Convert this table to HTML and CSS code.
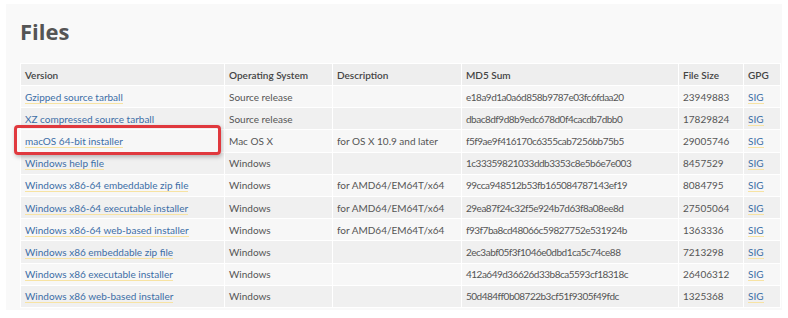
FILE: index.html
```html
<!DOCTYPE html>
<html lang="en">
<head>
    <meta charset="UTF-8">
    <title>Files</title>
    <link rel="stylesheet" href="styles.css">
</head>
<body>
    <div class="files-panel">
        <h2 class="files-title">Files</h2>

        <table class="files-table">
            <thead>
                <tr>
                    <th class="col-version">Version</th>
                    <th class="col-os">Operating System</th>
                    <th class="col-desc">Description</th>
                    <th class="col-md5">MD5 Sum</th>
                    <th class="col-size">File Size</th>
                    <th class="col-gpg">GPG</th>
                </tr>
            </thead>
            <tbody>
                <tr>
                    <td><a href="#">Gzipped source tarball</a></td>
                    <td>Source release</td>
                    <td></td>
                    <td class="md5">e18a9d1a0a6d858b9787e03fc6fdaa20</td>
                    <td>23949883</td>
                    <td><a href="#">SIG</a></td>
                </tr>
                <tr>
                    <td><a href="#">XZ compressed source tarball</a></td>
                    <td>Source release</td>
                    <td></td>
                    <td class="md5">dbac8df9d8b9edc678d0f4cacdb7dbb0</td>
                    <td>17829824</td>
                    <td><a href="#">SIG</a></td>
                </tr>
                <tr>
                    <td class="highlight-cell"><a href="#">macOS 64-bit installer</a><span class="highlight-box"></span></td>
                    <td>Mac OS X</td>
                    <td>for OS X 10.9 and later</td>
                    <td class="md5">f5f9ae9f416170c6355cab7256bb75b5</td>
                    <td>29005746</td>
                    <td><a href="#">SIG</a></td>
                </tr>
                <tr>
                    <td><a href="#">Windows help file</a></td>
                    <td>Windows</td>
                    <td></td>
                    <td class="md5">1c33359821033ddb3353c8e5b6e7e003</td>
                    <td>8457529</td>
                    <td><a href="#">SIG</a></td>
                </tr>
                <tr>
                    <td><a href="#">Windows x86-64 embeddable zip file</a></td>
                    <td>Windows</td>
                    <td>for AMD64/EM64T/x64</td>
                    <td class="md5">99cca948512b53fb165084787143ef19</td>
                    <td>8084795</td>
                    <td><a href="#">SIG</a></td>
                </tr>
                <tr>
                    <td><a href="#">Windows x86-64 executable installer</a></td>
                    <td>Windows</td>
                    <td>for AMD64/EM64T/x64</td>
                    <td class="md5">29ea87f24c32f5e924b7d63f8a08ee8d</td>
                    <td>27505064</td>
                    <td><a href="#">SIG</a></td>
                </tr>
                <tr>
                    <td><a href="#">Windows x86-64 web-based installer</a></td>
                    <td>Windows</td>
                    <td>for AMD64/EM64T/x64</td>
                    <td class="md5">f93f7ba8cd48066c59827752e531924b</td>
                    <td>1363336</td>
                    <td><a href="#">SIG</a></td>
                </tr>
                <tr>
                    <td><a href="#">Windows x86 embeddable zip file</a></td>
                    <td>Windows</td>
                    <td></td>
                    <td class="md5">2ec3abf05f3f1046e0dbd1ca5c74ce88</td>
                    <td>7213298</td>
                    <td><a href="#">SIG</a></td>
                </tr>
                <tr>
                    <td><a href="#">Windows x86 executable installer</a></td>
                    <td>Windows</td>
                    <td></td>
                    <td class="md5">412a649d36626d33b8ca5593cf18318c</td>
                    <td>26406312</td>
                    <td><a href="#">SIG</a></td>
                </tr>
                <tr>
                    <td><a href="#">Windows x86 web-based installer</a></td>
                    <td>Windows</td>
                    <td></td>
                    <td class="md5">50d484ff0b08722b3cf51f9305f49fdc</td>
                    <td>1325368</td>
                    <td><a href="#">SIG</a></td>
                </tr>
            </tbody>
        </table>
    </div>
</body>
</html>
```

FILE: styles.css
```css
* {
    margin: 0;
    padding: 0;
    box-sizing: border-box;
}

body {
    background: #ffffff;
    font-family: Lato, 'Open Sans', sans-serif;
    color: #555555;
    padding: 4px 6px 8px;
}

.files-panel {
    background: #f9f9f9;
    padding: 12px 2px 2px 14px;
    height: 306px;
}

.files-title {
    font-family: 'Open Sans', sans-serif;
    font-size: 22px;
    font-weight: 700;
    color: #555555;
    line-height: 30px;
    margin-bottom: 17px;
}

.files-table {
    width: 760px;
    border-collapse: collapse;
    font-size: 10px;
    table-layout: fixed;
}

.files-table th,
.files-table td {
    text-align: left;
    padding: 0 4px;
    height: 22.2px;
    border: 1px solid #ffffff;
    white-space: nowrap;
}

.files-table th {
    background: #eeeeee;
    color: #444444;
    font-weight: 600;
    height: 22px;
}

.files-table tbody tr:nth-child(odd) td {
    background: #f7f7f7;
}

.files-table tbody tr:nth-child(even) td {
    background: #f0f0f0;
}

.files-table td.md5 {
    letter-spacing: -0.5px;
}

.col-version { width: 204px; }
.col-os { width: 108px; }
.col-desc { width: 129px; }
.col-md5 { width: 217px; }
.col-size { width: 65px; }
.col-gpg { width: 37px; }

.files-table a {
    color: #3c6ea6;
    text-decoration: none;
    border-bottom: 1px solid #f7e3a3;
}

.highlight-cell {
    position: relative;
}

.highlight-box {
    position: absolute;
    left: -7px;
    top: -5px;
    width: 207px;
    height: 30px;
    border: 3px solid #e0393e;
    border-radius: 4px;
    box-shadow: 1px 2px 4px rgba(0, 0, 0, 0.25);
}
```
